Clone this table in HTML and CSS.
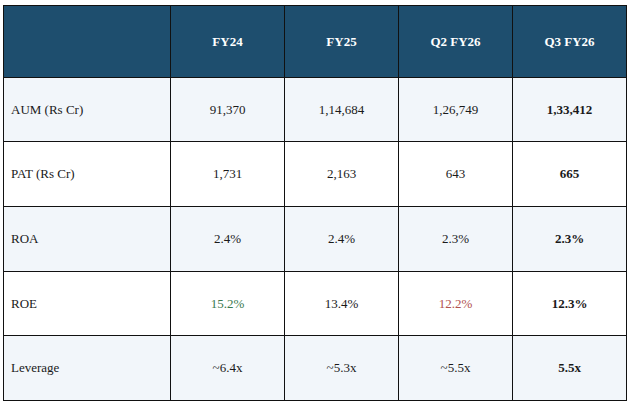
FILE: index.html
```html
<!DOCTYPE html>
<html lang="en">
<head>
<meta charset="utf-8">
<title>Key Metrics</title>
<link rel="stylesheet" href="styles.css">
</head>
<body>
<table class="metrics">
  <colgroup>
    <col class="col-label">
    <col class="col-val">
    <col class="col-val">
    <col class="col-val">
    <col class="col-val">
  </colgroup>
  <thead>
    <tr class="head-row">
      <th></th>
      <th>FY24</th>
      <th>FY25</th>
      <th>Q2 FY26</th>
      <th>Q3 FY26</th>
    </tr>
  </thead>
  <tbody>
    <tr class="row-a tint">
      <td class="label">AUM (Rs Cr)</td>
      <td>91,370</td>
      <td>1,14,684</td>
      <td>1,26,749</td>
      <td class="strong">1,33,412</td>
    </tr>
    <tr class="row-b">
      <td class="label">PAT (Rs Cr)</td>
      <td>1,731</td>
      <td>2,163</td>
      <td>643</td>
      <td class="strong">665</td>
    </tr>
    <tr class="row-b tint">
      <td class="label">ROA</td>
      <td>2.4%</td>
      <td>2.4%</td>
      <td>2.3%</td>
      <td class="strong">2.3%</td>
    </tr>
    <tr class="row-a">
      <td class="label">ROE</td>
      <td class="up">15.2%</td>
      <td>13.4%</td>
      <td class="down">12.2%</td>
      <td class="strong">12.3%</td>
    </tr>
    <tr class="row-b tint">
      <td class="label">Leverage</td>
      <td>~6.4x</td>
      <td>~5.3x</td>
      <td>~5.5x</td>
      <td class="strong">5.5x</td>
    </tr>
  </tbody>
</table>
</body>
</html>
```

FILE: styles.css
```css
html, body {
  margin: 0;
  padding: 0;
  background: #ffffff;
}

body {
  font-family: "Liberation Serif", "Times New Roman", serif;
  font-size: 13px;
  color: #1a1a1a;
}

.metrics {
  margin: 5px 0 0 3px;
  width: 624px;
  table-layout: fixed;
  border-collapse: collapse;
}

.col-label { width: 167px; }
.col-val { width: 114px; }

.metrics th,
.metrics td {
  box-sizing: border-box;
  border: 1px solid #111111;
  padding: 0;
  text-align: center;
  vertical-align: middle;
}

.head-row th {
  height: 72px;
  background: #1e4e6e;
  color: #ffffff;
  font-weight: bold;
}

.row-a td { height: 64px; }
.row-b td { height: 65px; }

.tint td { background: #f2f6fa; }

.metrics td.label {
  text-align: left;
  padding-left: 7px;
}

.strong { font-weight: bold; }
.up { color: #3b7a4f; }
.down { color: #b2524f; }
```
